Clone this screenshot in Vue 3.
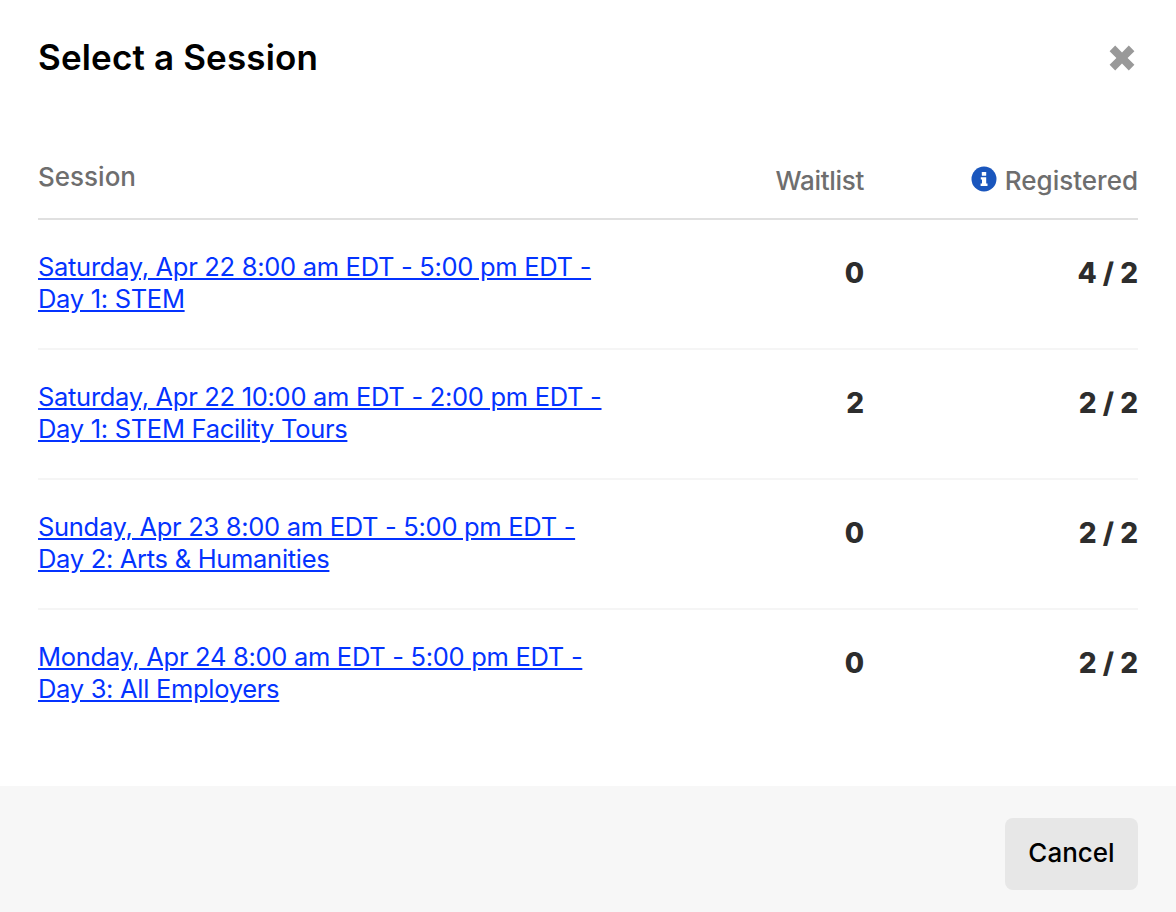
<script setup>
const rows = [
  { a: 'Saturday, Apr 22 8:00 am EDT - 5:00 pm EDT -', b: 'Day 1: STEM', w: '0', r: '4 / 2' },
  { a: 'Saturday, Apr 22 10:00 am EDT - 2:00 pm EDT -', b: 'Day 1: STEM Facility Tours', w: '2', r: '2 / 2' },
  { a: 'Sunday, Apr 23 8:00 am EDT - 5:00 pm EDT -', b: 'Day 2: Arts & Humanities', w: '0', r: '2 / 2' },
  { a: 'Monday, Apr 24 8:00 am EDT - 5:00 pm EDT -', b: 'Day 3: All Employers', w: '0', r: '2 / 2' },
]
</script>

<template>
  <div class="modal">
    <header class="head">
      <h1>Select a Session</h1>
      <svg class="close" width="28" height="28" viewBox="0 0 28 28" aria-label="Close">
        <path fill="#999" d="M7.2 1.6 14 8.4l6.8-6.8 5.6 5.6-6.8 6.8 6.8 6.8-5.6 5.6-6.8-6.8-6.8 6.8-5.6-5.6 6.8-6.8-6.8-6.8z" />
      </svg>
    </header>
    <section class="table">
      <div class="row th">
        <div class="c1">Session</div>
        <div class="c2">Waitlist</div>
        <div class="c3">
          <svg class="info" width="26" height="26" viewBox="0 0 26 26">
            <circle cx="13" cy="13" r="12.5" fill="#1a56bd" />
            <rect x="10.8" y="6" width="4.4" height="3.8" rx=".6" fill="#fff" />
            <path fill="#fff" d="M9.8 11.2h5.4v6.4h1.3v2.4H9.6v-2.4h1.4v-4H9.8z" />
          </svg>
          <span>Registered</span>
        </div>
      </div>
      <div v-for="row in rows" :key="row.a" class="row td">
        <div class="c1"><a href="#">{{ row.a }}<br />{{ row.b }}</a></div>
        <div class="c2 num">{{ row.w }}</div>
        <div class="c3 num">{{ row.r }}</div>
      </div>
    </section>
    <footer class="foot"><button type="button">Cancel</button></footer>
  </div>
</template>

<style>
html, body { margin: 0; background: #fff; }
</style>

<style scoped>
.modal {
  width: 1176px;
  height: 912px;
  display: flex;
  flex-direction: column;
  font-family: Inter, "Liberation Sans", sans-serif;
  overflow: hidden;
}
.head {
  height: 115px;
  padding: 0 40px 0 38px;
  display: flex;
  justify-content: space-between;
  align-items: center;
  box-sizing: border-box;
}
.head h1 {
  margin: 0 0 2px;
  font-size: 35px;
  font-weight: 600;
  color: #000;
  letter-spacing: 0.15px;
}
.table { padding: 0 38px; flex: 1; }
.row { display: flex; }
.th {
  height: 105px;
  border-bottom: 2px solid #e0e0e0;
  box-sizing: border-box;
  color: #6e6e6e;
  font-size: 26px;
  font-weight: 500;
}
.th .c1 { padding-top: 46px; }
.th .c2 { padding-top: 50px; letter-spacing: -0.3px; }
.th .c3 { display: flex; justify-content: flex-end; gap: 8px; align-items: flex-start; padding-top: 50px; }
.info { margin-top: 1px; }
.c1 { flex: 1; }
.c2 { width: 200px; text-align: right; }
.c3 { width: 274px; text-align: right; }
.td {
  height: 130px;
  box-sizing: border-box;
  border-bottom: 2px solid #f5f5f5;
  padding-top: 31px;
}
.td:last-child { border-bottom: 0; }
.td a {
  color: #0433ff;
  font-size: 25.5px;
  line-height: 32px;
  letter-spacing: -0.3px;
  text-decoration: underline;
}
.num {
  color: #2d2d2d;
  font-size: 28px;
  font-weight: 800;
  line-height: 44px;
  white-space: pre;
}
.foot {
  height: 126px;
  background: #f7f7f7;
  display: flex;
  justify-content: flex-end;
  align-items: flex-start;
  padding: 32px 38px 0 0;
  box-sizing: border-box;
}
.foot button {
  width: 133px;
  height: 72px;
  padding: 0 0 4px;
  border: 0;
  border-radius: 8px;
  background: #e7e7e7;
  color: #000;
  font: 500 26px Inter, "Liberation Sans", sans-serif;
}
</style>
